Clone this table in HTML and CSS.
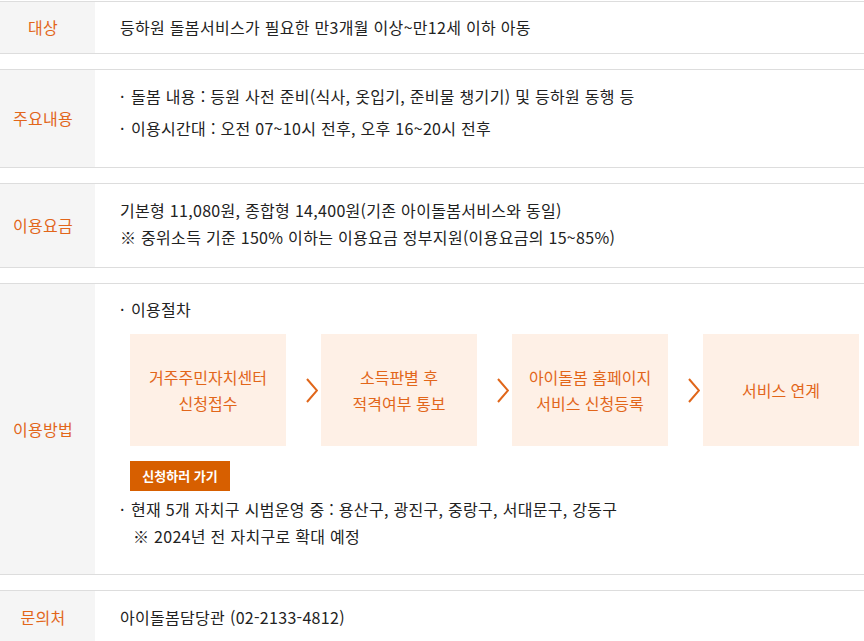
FILE: index.html
```html
<!DOCTYPE html>
<html lang="ko">
<head>
<meta charset="utf-8">
<title>아이돌봄 등하원 서비스</title>
<link rel="stylesheet" href="styles.css">
</head>
<body>
<div class="info">
  <section class="row row-target">
    <div class="label">대상</div>
    <div class="content">
      <p class="line">등하원 돌봄서비스가 필요한 만3개월 이상~만12세 이하 아동</p>
    </div>
  </section>

  <section class="row row-main">
    <div class="label">주요내용</div>
    <div class="content">
      <ul class="bullets">
        <li>돌봄 내용 : 등원 사전 준비(식사, 옷입기, 준비물 챙기기) 및 등하원 동행 등</li>
        <li>이용시간대 : 오전 07~10시 전후, 오후 16~20시 전후</li>
      </ul>
    </div>
  </section>

  <section class="row row-fee">
    <div class="label">이용요금</div>
    <div class="content">
      <p class="line">기본형 11,080원, 종합형 14,400원(기존 아이돌봄서비스와 동일)</p>
      <p class="line">※ 중위소득 기준 150% 이하는 이용요금 정부지원(이용요금의 15~85%)</p>
    </div>
  </section>

  <section class="row row-how">
    <div class="label">이용방법</div>
    <div class="content">
      <ul class="bullets">
        <li>이용절차</li>
      </ul>
      <div class="steps">
        <div class="step">거주주민자치센터<br>신청접수</div>
        <div class="arrow"><svg width="12" height="25" viewBox="0 0 12 25"><path d="M1 1 L11 12.5 L1 24" fill="none" stroke="#e0661a" stroke-width="2"/></svg></div>
        <div class="step">소득판별 후<br>적격여부 통보</div>
        <div class="arrow"><svg width="12" height="25" viewBox="0 0 12 25"><path d="M1 1 L11 12.5 L1 24" fill="none" stroke="#e0661a" stroke-width="2"/></svg></div>
        <div class="step">아이돌봄 홈페이지<br>서비스 신청등록</div>
        <div class="arrow"><svg width="12" height="25" viewBox="0 0 12 25"><path d="M1 1 L11 12.5 L1 24" fill="none" stroke="#e0661a" stroke-width="2"/></svg></div>
        <div class="step">서비스 연계</div>
      </div>
      <a class="apply" href="#">신청하러 가기</a>
      <ul class="bullets bullets-after">
        <li>현재 5개 자치구 시범운영 중 : 용산구, 광진구, 중랑구, 서대문구, 강동구<br><span class="note">※ 2024년 전 자치구로 확대 예정</span></li>
      </ul>
    </div>
  </section>

  <section class="row row-contact">
    <div class="label">문의처</div>
    <div class="content">
      <p class="line">아이돌봄담당관 (02-2133-4812)</p>
    </div>
  </section>
</div>
</body>
</html>
```

FILE: styles.css
```css
html, body {
  margin: 0;
  padding: 0;
  background: #fff;
}

body {
  font-family: "Noto Sans CJK KR", "Noto Sans", sans-serif;
  font-size: 16px;
  letter-spacing: 0.3px;
  color: #222;
}

.info {
  padding-top: 1px;
}

.row {
  display: flex;
  border-top: 1px solid #dddddd;
  border-bottom: 1px solid #dddddd;
  margin-bottom: 15px;
}

.label {
  flex: 0 0 95px;
  box-sizing: border-box;
  padding-right: 9px;
  background: #f5f5f5;
  color: #e2661a;
  display: flex;
  align-items: center;
  justify-content: center;
  line-height: 27px;
}

.content {
  flex: 1;
  padding-left: 25px;
  line-height: 27px;
}

.line {
  margin: 0;
}

.bullets {
  list-style: none;
  margin: 0;
  padding: 0;
}

.bullets li {
  padding-left: 11px;
}

.bullets li::before {
  content: "·";
  display: inline-block;
  width: 11px;
  margin-left: -11px;
}

.row-target .content {
  padding-top: 12px;
  padding-bottom: 12px;
}

.row-main .content {
  padding-top: 13px;
  padding-bottom: 25px;
}

.row-main .bullets li + li {
  margin-top: 5px;
}

.row-fee .content {
  padding-top: 13px;
  padding-bottom: 16px;
}

.row-how .content {
  padding-top: 12px;
  padding-bottom: 24px;
}

.steps {
  display: flex;
  padding-left: 10px;
  margin-top: 11px;
}

.step {
  flex: 0 0 156px;
  height: 112px;
  background: #fef0e6;
  color: #e2661a;
  display: flex;
  align-items: center;
  justify-content: center;
  text-align: center;
  line-height: 26px;
  letter-spacing: 0;
}

.arrow {
  flex: 0 0 35px;
  box-sizing: border-box;
  padding-right: 3px;
  display: flex;
  align-items: center;
  justify-content: flex-end;
}

.arrow svg {
  display: block;
}

.apply {
  display: inline-block;
  margin: 15px 0 0 10px;
  width: 100px;
  height: 30px;
  line-height: 30px;
  text-align: center;
  background: #d75f00;
  color: #fff;
  font-size: 13px;
  font-weight: bold;
  letter-spacing: 0;
  text-decoration: none;
  vertical-align: top;
}

.bullets-after {
  margin-top: 5px;
}

.note {
  padding-left: 2px;
}

.row-contact {
  margin-bottom: 0;
}

.row-contact .content {
  padding-top: 13px;
  padding-bottom: 13px;
}
```
